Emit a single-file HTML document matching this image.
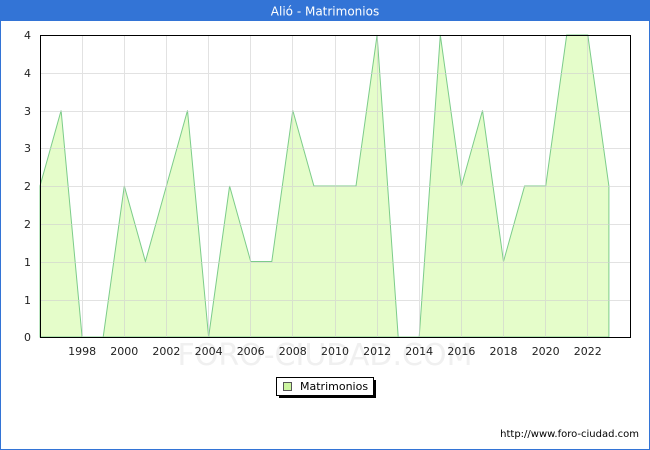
<!DOCTYPE html>
<html><head><style>
body{margin:0;width:650px;height:450px;overflow:hidden;background:#fff;font-family:"DejaVu Sans","Liberation Sans",sans-serif}
</style></head><body>
<svg width="650" height="450" xmlns="http://www.w3.org/2000/svg" style="position:absolute;left:0;top:0">
<rect x="0" y="0" width="650" height="450" fill="#fff"/>
<rect x="0" y="0" width="650" height="21" fill="#3374d6"/>
<rect x="0" y="0" width="1" height="450" fill="#3374d6"/>
<rect x="649" y="0" width="1" height="450" fill="#3374d6"/>
<rect x="0" y="449" width="650" height="1" fill="#3374d6"/>
<text x="325" y="15.5" font-size="12" fill="#fff" text-anchor="middle">Alió - Matrimonios</text>
<text x="325" y="365" font-size="30" fill="#f0f0f0" text-anchor="middle">FORO-CIUDAD.COM</text>
<polygon fill="#e5fdca" stroke="#7ccc8a" stroke-width="1" points="40,337 40,186 61.1,110.5 82.1,337 103.2,337 124.3,186 145.4,261.5 166.4,186 187.5,110.5 208.6,337 229.6,186 250.7,261.5 271.8,261.5 292.8,110.5 313.9,186 335,186 356,186 377.1,35 398.2,337 419.2,337 440.3,35 461.4,186 482.5,110.5 503.5,261.5 524.6,186 545.7,186 566.7,35 587.8,35 608.9,186 608.9,337"/>
<g stroke="#d0d0d0" stroke-width="1" opacity="0.6">
<line x1="82.5" y1="35" x2="82.5" y2="337"/><line x1="124.5" y1="35" x2="124.5" y2="337"/><line x1="166.5" y1="35" x2="166.5" y2="337"/><line x1="208.5" y1="35" x2="208.5" y2="337"/><line x1="250.5" y1="35" x2="250.5" y2="337"/><line x1="292.5" y1="35" x2="292.5" y2="337"/><line x1="335.5" y1="35" x2="335.5" y2="337"/><line x1="377.5" y1="35" x2="377.5" y2="337"/><line x1="419.5" y1="35" x2="419.5" y2="337"/><line x1="461.5" y1="35" x2="461.5" y2="337"/><line x1="503.5" y1="35" x2="503.5" y2="337"/><line x1="545.5" y1="35" x2="545.5" y2="337"/><line x1="587.5" y1="35" x2="587.5" y2="337"/>
<line x1="40" y1="73.5" x2="630" y2="73.5"/><line x1="40" y1="111.5" x2="630" y2="111.5"/><line x1="40" y1="148.5" x2="630" y2="148.5"/><line x1="40" y1="186.5" x2="630" y2="186.5"/><line x1="40" y1="224.5" x2="630" y2="224.5"/><line x1="40" y1="262.5" x2="630" y2="262.5"/><line x1="40" y1="300.5" x2="630" y2="300.5"/>
</g>
<rect x="40.5" y="35.5" width="590" height="302" fill="none" stroke="#000" stroke-width="1"/>
<g font-size="11" fill="#222" text-anchor="end">
<text x="31" y="39">4</text><text x="31" y="77">4</text><text x="31" y="115">3</text><text x="31" y="152">3</text><text x="31" y="190">2</text><text x="31" y="228">2</text><text x="31" y="266">1</text><text x="31" y="304">1</text><text x="31" y="341">0</text>
</g>
<g font-size="11" fill="#222" text-anchor="middle">
<text x="82.1" y="355">1998</text><text x="124.3" y="355">2000</text><text x="166.4" y="355">2002</text><text x="208.6" y="355">2004</text><text x="250.7" y="355">2006</text><text x="292.8" y="355">2008</text><text x="335" y="355">2010</text><text x="377.1" y="355">2012</text><text x="419.2" y="355">2014</text><text x="461.4" y="355">2016</text><text x="503.5" y="355">2018</text><text x="545.7" y="355">2020</text><text x="587.8" y="355">2022</text>
</g>
<rect x="279" y="380" width="97" height="18" fill="#000"/>
<rect x="276.5" y="377.5" width="97" height="18" fill="#fff" stroke="#000"/>
<rect x="283.5" y="382.5" width="8" height="8" fill="#ccf5a0" stroke="#555"/>
<text x="300" y="390" font-size="11" fill="#000">Matrimonios</text>
<text x="639" y="437" font-size="10" fill="#000" text-anchor="end">http://www.foro-ciudad.com</text>
</svg>
</body></html>
